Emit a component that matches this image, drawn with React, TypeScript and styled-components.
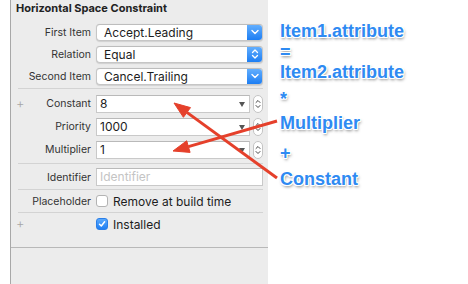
import React from 'react';
import styled, { createGlobalStyle } from 'styled-components';

const Global = createGlobalStyle`
  html, body { margin: 0; padding: 0; background: #fff; }
  body { font-family: Inter, "Liberation Sans", sans-serif; }
`;

const Page = styled.div`
  position: relative;
  display: flex;
  width: 468px;
  height: 284px;
  padding-left: 10px;
  box-sizing: border-box;
  overflow: hidden;
`;

const Panel = styled.div`
  width: 257px;
  display: flex;
  flex-direction: column;
  background: #ececec;
  border-left: 1px solid #a8a8a8;
`;

const Inspector = styled.div`
  height: 248px;
  box-sizing: border-box;
  border-bottom: 1px solid #b8b8b8;
  display: flex;
  flex-direction: column;
`;

const Title = styled.div`
  height: 18px;
  line-height: 17px;
  padding-left: 5px;
  font-size: 11px;
  font-weight: 700;
  color: #222;
  margin-bottom: 3px;
`;

const Row: any = styled.div`
  position: relative;
  display: grid;
  grid-template-columns: 80px 1fr;
  column-gap: 5px;
  align-items: center;
  height: ${(p: any) => p.h || 22}px;
  margin-top: ${(p: any) => p.mt || 0}px;
  padding-right: 5px;
`;

const Label = styled.span`
  text-align: right;
  font-size: 10.5px;
  color: #333;
  white-space: nowrap;
`;

const Plus = styled.span`
  position: absolute;
  left: 5px;
  top: 50%;
  transform: translateY(-55%);
  font-size: 13px;
  font-weight: 300;
  color: #a6a6a6;
`;

const Separator: any = styled.div`
  height: 1px;
  margin: ${(p: any) => p.mt || 0}px 5px 0 7px;
  background: #d3d3d3;
`;

const Popup = styled.div`
  display: flex;
  height: 17px;
  box-sizing: border-box;
  background: #fff;
  border: 1px solid #c6c6c6;
  border-top-color: #bdbdbd;
  border-radius: 4px;
  box-shadow: 0 0.5px 1px rgba(0, 0, 0, 0.12);
  overflow: hidden;
`;

const PopupText = styled.span`
  flex: 1;
  padding-left: 7px;
  font-size: 12px;
  line-height: 15px;
  color: #1d1d1d;
`;

const PopupArrow = styled.span`
  width: 15px;
  display: flex;
  align-items: center;
  justify-content: center;
  background: linear-gradient(#62aefe, #1d7ef3);
`;

const Combo = styled.div`
  display: flex;
  align-items: center;
  gap: 3px;
`;

const Field: any = styled.div`
  flex: 1;
  position: relative;
  height: 18px;
  box-sizing: border-box;
  background: #fff;
  border: 1px solid #c9c9c9;
  border-top-color: #b9b9b9;
  padding-left: 3px;
  font-size: 12px;
  line-height: 16px;
  color: ${(p: any) => (p.placeholder ? '#c4c4c4' : '#1d1d1d')};
`;

const Caret = styled.span`
  position: absolute;
  right: 4px;
  top: 6px;
  width: 0;
  height: 0;
  border-left: 3.5px solid transparent;
  border-right: 3.5px solid transparent;
  border-top: 5px solid #555;
`;

const Stepper = styled.div`
  width: 10px;
  height: 18px;
  box-sizing: border-box;
  border: 1px solid #c4c4c4;
  border-radius: 5px;
  background: #fff;
  display: flex;
  align-items: center;
  justify-content: center;
`;

const Check = styled.label`
  display: flex;
  align-items: center;
  gap: 5px;
  font-size: 12px;
  color: #1d1d1d;
`;

const Box: any = styled.span`
  width: 12px;
  height: 12px;
  box-sizing: border-box;
  border-radius: 3px;
  display: flex;
  align-items: center;
  justify-content: center;
  background: ${(p: any) => (p.on ? 'linear-gradient(#5aa9fd, #1f7ff3)' : '#fff')};
  border: 1px solid ${(p: any) => (p.on ? '#2a7ee8' : '#b3b3b3')};
`;

const Lower = styled.div`
  flex: 1;
`;

const Notes = styled.div`
  display: flex;
  flex-direction: column;
  padding: 21px 0 0 12px;
`;

const Note: any = styled.div`
  margin-top: ${(p: any) => p.mt || 0}px;
  height: 20px;
  line-height: 20px;
  font-family: "Liberation Sans", Arial, sans-serif;
  font-weight: 700;
  font-size: 18px;
  color: #2e8af2;
  text-shadow: 1px 0 0 #fff, -1px 0 0 #fff, 0 1px 0 #fff, 0 -1px 0 #fff,
    1px 1px 0 #fff, -1px -1px 0 #fff, 1px -1px 0 #fff, -1px 1px 0 #fff,
    1px 2px 3px rgba(0, 0, 0, 0.5);
  white-space: nowrap;
`;

const Arrows = styled.svg`
  position: absolute;
  left: 0;
  top: 0;
  pointer-events: none;
`;

const ChevronDown = () => (
  <svg width="8" height="6" viewBox="0 0 8 6"><path d="M1 1.5 4 4.5 7 1.5" stroke="#fff" strokeWidth="1.4" fill="none" strokeLinecap="round" strokeLinejoin="round" /></svg>
);

const ChevronUpDown = () => (
  <svg width="8" height="12" viewBox="0 0 8 12"><path d="M1.5 4.5 4 2 6.5 4.5M1.5 7.5 4 10 6.5 7.5" stroke="#fff" strokeWidth="1.3" fill="none" strokeLinecap="round" strokeLinejoin="round" /></svg>
);

const StepIcon = () => (
  <svg width="6" height="12" viewBox="0 0 6 12"><path d="M1 4.5 3 2.5 5 4.5M1 7.5 3 9.5 5 7.5" stroke="#444" strokeWidth="1" fill="none" strokeLinecap="round" strokeLinejoin="round" /></svg>
);

const Tick = () => (
  <svg width="8" height="8" viewBox="0 0 8 8"><path d="M1.5 4.2 3.3 6 6.6 1.8" stroke="#fff" strokeWidth="1.5" fill="none" strokeLinecap="round" strokeLinejoin="round" /></svg>
);

function Select({ value, both }: { value: string; both?: boolean }) {
  return (
    <Popup>
      <PopupText>{value}</PopupText>
      <PopupArrow>{both ? <ChevronUpDown /> : <ChevronDown />}</PopupArrow>
    </Popup>
  );
}

function NumberCombo({ value }: { value: string }) {
  return (
    <Combo>
      <Field>
        {value}
        <Caret />
      </Field>
      <Stepper>
        <StepIcon />
      </Stepper>
    </Combo>
  );
}

export default function App() {
  return (
    <Page>
      <Global />
      <Panel>
        <Inspector>
          <Title>Horizontal Space Constraint</Title>
          <Row>
            <Label>First Item</Label>
            <Select value="Accept.Leading" />
          </Row>
          <Row>
            <Label>Relation</Label>
            <Select value="Equal" both />
          </Row>
          <Row>
            <Label>Second Item</Label>
            <Select value="Cancel.Trailing" />
          </Row>
          <Separator mt={1} />
          <Row h={23} mt={3}>
            <Plus>+</Plus>
            <Label>Constant</Label>
            <NumberCombo value="8" />
          </Row>
          <Row h={23}>
            <Label>Priority</Label>
            <NumberCombo value="1000" />
          </Row>
          <Row h={23}>
            <Label>Multiplier</Label>
            <NumberCombo value="1" />
          </Row>
          <Separator mt={2} />
          <Row mt={2}>
            <Label>Identifier</Label>
            <Field placeholder="1">Identifier</Field>
          </Row>
          <Separator mt={1} />
          <Row>
            <Label>Placeholder</Label>
            <Check>
              <Box />
              Remove at build time
            </Check>
          </Row>
          <Separator />
          <Row>
            <Plus>+</Plus>
            <span />
            <Check>
              <Box on>
                <Tick />
              </Box>
              Installed
            </Check>
          </Row>
        </Inspector>
        <Lower />
      </Panel>
      <Notes>
        <Note>Item1.attribute</Note>
        <Note mt={1}>=</Note>
        <Note>Item2.attribute</Note>
        <Note mt={7}>*</Note>
        <Note mt={4}>Multiplier</Note>
        <Note mt={10}>+</Note>
        <Note mt={6}>Constant</Note>
      </Notes>
      <Arrows width="468" height="284" viewBox="0 0 468 284">
        <g fill="#e5402b" stroke="#e5402b">
          <line x1="277" y1="121" x2="188.4" y2="146.6" strokeWidth="3" />
          <polygon points="173,151 190.1,152.4 186.7,140.8" strokeWidth="1" strokeLinejoin="round" />
          <line x1="277" y1="178" x2="186.9" y2="112.4" strokeWidth="3" />
          <polygon points="174,103 190.5,107.6 183.4,117.3" strokeWidth="1" strokeLinejoin="round" />
        </g>
      </Arrows>
    </Page>
  );
}
